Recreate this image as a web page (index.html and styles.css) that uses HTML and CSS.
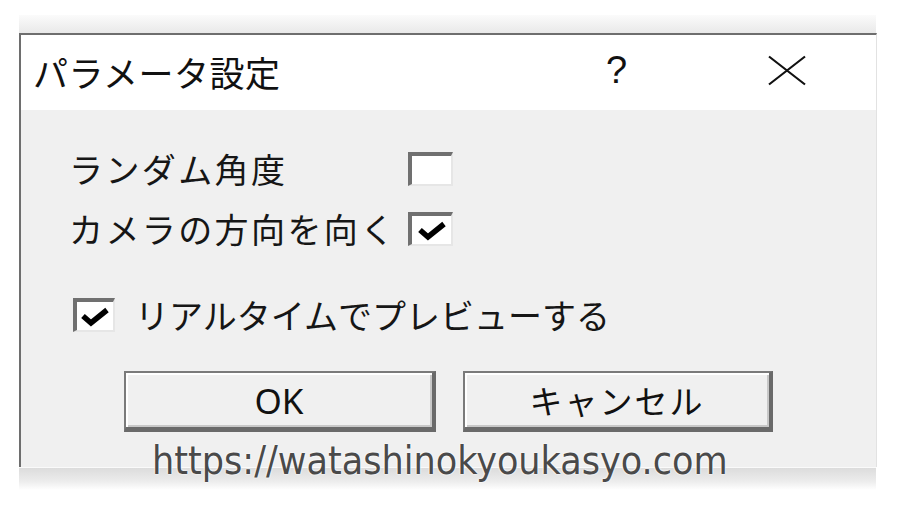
FILE: index.html
```html
<!DOCTYPE html>
<html lang="ja">
<head>
<meta charset="utf-8">
<link rel="stylesheet" href="styles.css">
</head>
<body>
<div class="page">
  <div class="shadow-top"></div>
  <div class="dialog">
    <div class="titlebar">
      <span class="title">パラメータ設定</span>
      <span class="help">?</span>
      <svg class="close" width="40" height="31" viewBox="0 0 40 31"><path d="M2 1.5 L38 29.5 M38 1.5 L2 29.5" stroke="#111" stroke-width="2.2" fill="none"/></svg>
    </div>
    <div class="content">
      <div class="opts">
        <span class="label wide">ランダム角度</span>
        <span class="cb"></span>
        <span class="label wide">カメラの方向を向く</span>
        <span class="cb"><svg class="tick" viewBox="0 0 30 22"><path d="M3 10 L11 17 L27 4" stroke="#000" stroke-width="5.5" fill="none" stroke-linejoin="miter"/></svg></span>
      </div>
      <div class="preview">
        <span class="cb cb-small"><svg class="tick" viewBox="0 0 30 22"><path d="M3 10 L11 17 L27 4" stroke="#000" stroke-width="5.5" fill="none" stroke-linejoin="miter"/></svg></span>
        <span class="label">リアルタイムでプレビューする</span>
      </div>
      <div class="buttons">
        <div class="btn btn-ok">OK</div>
        <div class="btn btn-cancel">キャンセル</div>
      </div>
    </div>
  </div>
  <div class="shadow-bottom"></div>
  <div class="watermark">https://watashinokyoukasyo.com</div>
</div>
</body>
</html>
```

FILE: styles.css
```css
html, body {
  margin: 0;
  padding: 0;
  background: #ffffff;
}
body {
  width: 904px;
  height: 512px;
  overflow: hidden;
  font-family: "Noto Sans CJK JP", "Noto Sans", sans-serif;
  color: #111;
}
.page {
  position: relative;
  padding-top: 15px;
  padding-left: 19px;
}
.shadow-top {
  width: 857px;
  height: 18px;
  background: linear-gradient(to bottom, #fbfbfb, #e9e9e9);
}
.dialog {
  width: 855px;
  border-top: 2px solid #6e6e6e;
  border-left: 2px solid #6e6e6e;
  border-right: 1px solid #e2e2e2;
}
.titlebar {
  height: 75px;
  background: #ffffff;
  display: flex;
  align-items: center;
  padding-left: 12px;
}
.title {
  font-size: 35px;
  line-height: 1;
  flex: 1;
  letter-spacing: 0.5px;
  margin-top: -2px;
}
.help {
  font-family: "Liberation Sans", sans-serif;
  font-size: 38px;
  line-height: 1;
  width: 161px;
  margin-top: -6px;
}
.close {
  margin-right: 69px;
  margin-top: -4px;
}
.content {
  height: 357px;
  background: #f0f0f0;
  box-sizing: border-box;
  padding-top: 42px;
}
.opts {
  display: grid;
  grid-template-columns: 339px 45px;
  row-gap: 26px;
  padding-left: 48px;
  align-items: center;
}
.label {
  font-size: 34px;
  line-height: 34px;
  color: #161616;
  white-space: nowrap;
}
.wide {
  letter-spacing: 2.4px;
}
.cb {
  display: flex;
  align-items: center;
  justify-content: center;
  box-sizing: border-box;
  width: 45px;
  height: 34px;
  background: #ffffff;
  border-top: 4px solid #707070;
  border-left: 4px solid #707070;
  border-right: 2px solid #e6e6e6;
  border-bottom: 2px solid #e6e6e6;
}
.cb-small {
  width: 42px;
}
.tick {
  width: 30px;
  height: 22px;
  margin-top: 2px;
}
.preview {
  display: flex;
  align-items: center;
  gap: 20px;
  padding-left: 52px;
  margin-top: 52px;
}
.buttons {
  display: flex;
  gap: 27px;
  padding-left: 103px;
  margin-top: 39px;
}
.btn {
  box-sizing: border-box;
  height: 61px;
  display: flex;
  align-items: center;
  justify-content: center;
  background: #f0f0f0;
  border-top: 2px solid #7a7a7a;
  border-left: 2px solid #7a7a7a;
  border-right: 4px solid #6a6a6a;
  border-bottom: 5px solid #6a6a6a;
  box-shadow: inset 2px 2px 0 #ffffff, inset -2px -2px 0 #c8c8c8;
  font-size: 33px;
  line-height: 1;
  color: #111;
}
.btn-ok {
  width: 312px;
  font-family: "Noto Sans", "Noto Sans CJK JP", sans-serif;
  font-size: 35px;
}
.btn-cancel {
  width: 310px;
  letter-spacing: 2px;
}
.shadow-bottom {
  width: 857px;
  height: 22px;
  border-top: 1px solid #fafafa;
  background: linear-gradient(to bottom, #dcdcdc, #ececec 60%, #ffffff);
}
.watermark {
  position: absolute;
  left: 152px;
  top: 434px;
  font-family: "DejaVu Sans Condensed", "DejaVu Sans", sans-serif;
  font-stretch: condensed;
  font-size: 39px;
  line-height: 1.4;
  color: #4a4a4a;
  text-shadow: 0 0 2px #ffffff, 0 0 2px #ffffff;
  white-space: nowrap;
}
```
